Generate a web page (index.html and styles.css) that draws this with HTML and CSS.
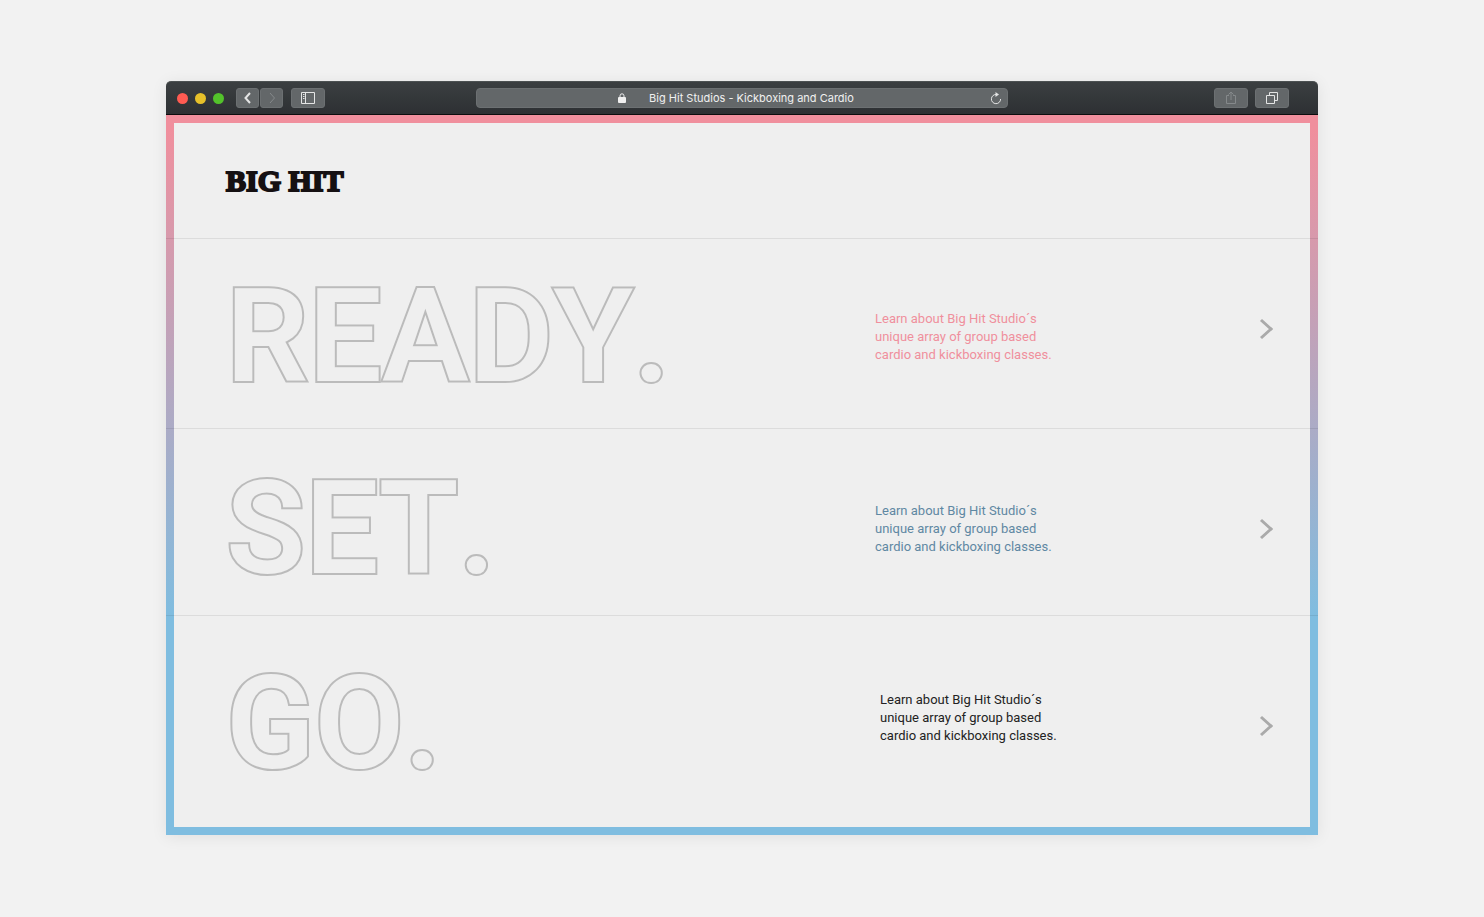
FILE: index.html
```html
<!DOCTYPE html>
<html lang="en">
<head>
    <meta charset="UTF-8">
    <meta name="viewport" content="width=device-width, initial-scale=1.0">
    <title>Big Hit Studios - Kickboxing and Cardio</title>
    <link rel="stylesheet" href="styles.css">
</head>
<body>
    <div class="window">
        <div class="toolbar">
            <div class="toolbar-side">
                <div class="lights">
                    <span class="light red"></span>
                    <span class="light yellow"></span>
                    <span class="light green"></span>
                </div>
                <div class="history">
                    <button type="button" class="tool back" aria-label="Back">
                        <svg width="8" height="12" viewBox="0 0 8 12"><path d="M6 1 1.500 6 6 11"/></svg>
                    </button>
                    <button type="button" class="tool forward" aria-label="Forward" disabled>
                        <svg width="8" height="12" viewBox="0 0 8 12"><path d="M2 1l4.500 5L2 11"/></svg>
                    </button>
                </div>
                <button type="button" class="tool wide" aria-label="Sidebar">
                    <svg width="14" height="12" viewBox="0 0 14 12"><path d="M.5.5h13v11H.5zM4.500.5v11M2 2.500h1.500M2 4.500h1.500M2 6.500h1.500"/></svg>
                </button>
            </div>
            <div class="address">
                <span class="address-text">
                    <svg class="lock" width="8" height="10" viewBox="0 0 8 10"><path d="M2 4.500V2.800a2 2 0 0 1 4 0v1.700"/><rect x="0" y="4" width="8" height="6" rx="1"/></svg>
                    <span>Big Hit Studios - Kickboxing and Cardio</span>
                </span>
                <button type="button" class="reload" aria-label="Reload">
                    <svg width="12" height="13" viewBox="0 0 12 13"><path d="M6.500 2.500A4.600 4.600 0 1 0 10.600 7"/><path class="solid" d="M5.500 0v5l3.500-2.500z"/></svg>
                </button>
            </div>
            <div class="toolbar-side end">
                <button type="button" class="tool wide" aria-label="Share" disabled>
                    <svg width="12" height="14" viewBox="0 0 12 14"><path d="M4 4.500H1.500v8h9v-8H8M6 9V1M3.500 3.500 6 1l2.500 2.500"/></svg>
                </button>
                <button type="button" class="tool wide" aria-label="Show tabs">
                    <svg width="12" height="12" viewBox="0 0 12 12"><path d="M.5 3.500h8v8h-8zM3.500 3.500v-3h8v8h-3"/></svg>
                </button>
            </div>
        </div>

        <main class="page">
            <header>
                <h1 class="logo">BIG HIT</h1>
            </header>

            <section class="row ready">
                <h2>READY.</h2>
                <p>Learn about Big Hit Studio´s<br>unique array of group based<br>cardio and kickboxing classes.</p>
                <a href="#ready" aria-label="Ready">
                    <svg width="14" height="22" viewBox="0 0 14 22"><path d="M2 2l10 9-10 9"/></svg>
                </a>
            </section>

            <section class="row set">
                <h2>SET.</h2>
                <p>Learn about Big Hit Studio´s<br>unique array of group based<br>cardio and kickboxing classes.</p>
                <a href="#set" aria-label="Set">
                    <svg width="14" height="22" viewBox="0 0 14 22"><path d="M2 2l10 9-10 9"/></svg>
                </a>
            </section>

            <section class="row go">
                <h2>GO.</h2>
                <p>Learn about Big Hit Studio´s<br>unique array of group based<br>cardio and kickboxing classes.</p>
                <a href="#go" aria-label="Go">
                    <svg width="14" height="22" viewBox="0 0 14 22"><path d="M2 2l10 9-10 9"/></svg>
                </a>
            </section>
        </main>
    </div>
</body>
</html>
```
FILE: styles.css
```css
:root {
    --pink: #f08f9d;
    --blue: #7fbde0;
    --paper: #efefef;
    --outline: #bbb;
}

* {
    margin: 0;
    padding: 0;
    box-sizing: border-box;
}

body {
    font-family: Roboto, sans-serif;
    background-color: #f2f2f2;
    padding: 81px 24px;
}

svg {
    display: block;
    fill: none;
    stroke: currentColor;
}

.window {
    max-width: 1152px;
    margin: 0 auto;
    border-radius: 5px 5px 0 0;
    box-shadow: 0 2px 16px rgba(0, 0, 0, 0.08);
}

/* Browser toolbar */
.toolbar {
    display: flex;
    align-items: center;
    justify-content: space-between;
    height: 34px;
    padding: 0 11px;
    background: linear-gradient(#3b3f41, #2d3033);
    border-top: 1px solid #4c5152;
    border-bottom: 1px solid #0c0d0e;
    border-radius: 5px 5px 0 0;
}

.toolbar-side {
    display: flex;
    flex: 1 1 160px;
    align-items: center;
}

.toolbar-side.end {
    justify-content: flex-end;
    gap: 7px;
    padding-right: 18px;
}

.lights {
    display: flex;
    gap: 7px;
    margin-right: 12px;
}

.light {
    width: 11px;
    height: 11px;
    border-radius: 50%;
}

.red {
    background-color: #ff5b52;
}

.yellow {
    background-color: #e6c02a;
}

.green {
    background-color: #53c22b;
}

.history {
    display: flex;
    gap: 1px;
    margin-right: 8px;
}

.tool {
    display: flex;
    align-items: center;
    justify-content: center;
    width: 23px;
    height: 20px;
    color: #e4e5e5;
    background-color: #636769;
    border: 1px solid #6c7072;
    border-radius: 3px;
}

.tool:disabled {
    color: #85898b;
}

.back svg {
    stroke-width: 2;
}

.tool.wide {
    width: 34px;
}

.address {
    display: flex;
    flex: 0 1 532px;
    align-items: center;
    height: 20px;
    padding: 0 5px;
    color: #f0f0f0;
    background-color: #636769;
    border: 1px solid #6c7072;
    border-radius: 4px;
}

.address-text {
    display: flex;
    flex: 1;
    align-items: center;
    justify-content: center;
    gap: 23px;
    font-family: Inter, sans-serif;
    font-size: 11px;
    line-height: 18px;
    white-space: nowrap;
}

.lock rect {
    fill: currentColor;
    stroke: none;
}

.reload {
    color: #e4e5e5;
    background: none;
    border: none;
}

.reload .solid {
    fill: currentColor;
    stroke: none;
}

/* Page inside the window */
.page {
    background-color: var(--paper);
    border: 8px solid;
    border-image: linear-gradient(var(--pink) 2%, var(--blue) 70%) 8;
}

header {
    padding: 38px 52px 37px;
}

.logo {
    font-family: "Liberation Serif", serif;
    font-size: 30px;
    line-height: 40px;
    color: #151012;
    -webkit-text-stroke: 2px #151012;
}

.row {
    display: grid;
    grid-template-columns: 643px 1fr auto;
    align-items: center;
    margin: 0 -8px;
    padding: 0 45px 0 58px;
    border-top: 1px solid rgba(0, 0, 0, 0.08);
}

/* The fill is painted over the inner half of the stroke, so only the outer edge shows */
.row h2 {
    padding-left: 2px;
    font-size: 130px;
    font-weight: 600;
    line-height: 150px;
    font-kerning: none;
    color: var(--paper);
    -webkit-text-stroke: 4px var(--outline);
    paint-order: stroke fill;
}

.row p {
    padding-left: 8px;
    font-size: 13px;
    line-height: 18px;
}

.row a {
    color: #aaa;
}

.row a svg {
    stroke-width: 3;
}

.ready {
    padding-top: 23px;
    padding-bottom: 16px;
}

.ready p {
    color: var(--pink);
}

.ready a {
    padding-bottom: 16px;
}

.set {
    padding-top: 25px;
    padding-bottom: 11px;
}

.set p {
    color: #5f88a3;
}

.go {
    padding-top: 33px;
    padding-bottom: 28px;
}

.go p {
    padding-left: 13px;
    padding-bottom: 12px;
    color: #222;
}

.go a {
    padding-top: 4px;
}
```
